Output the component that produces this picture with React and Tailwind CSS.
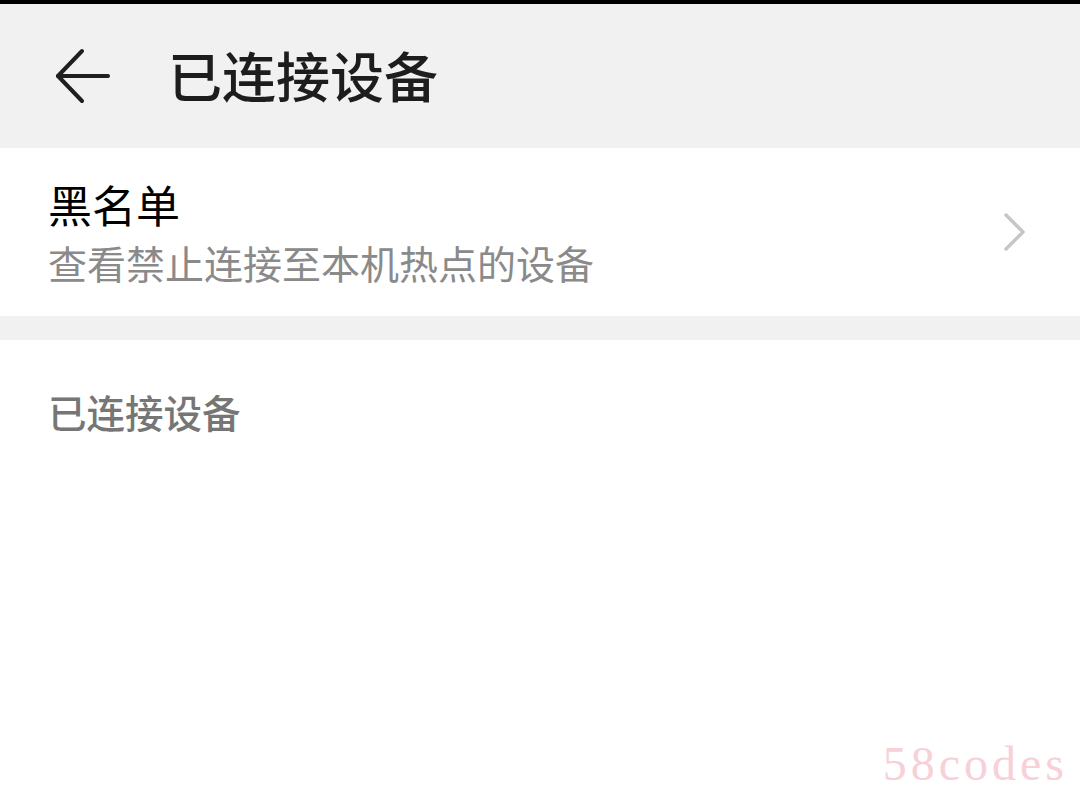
import React from 'react';

const cjk = { fontFamily: '"Noto Sans CJK SC", "Noto Sans", sans-serif' };

function BackArrow() {
  return (
    <svg width="58" height="58" viewBox="0 0 58 58" fill="none" stroke="#1f1f1f" strokeWidth="4" strokeLinecap="round" strokeLinejoin="round">
      <path d="M54 29H4" />
      <path d="M28 4L4 29l24 25" />
    </svg>
  );
}

function Chevron() {
  return (
    <svg width="24" height="40" viewBox="0 0 24 40" fill="none" stroke="#c6c6c6" strokeWidth="3.5" strokeLinecap="round" strokeLinejoin="round">
      <path d="M4 3l17 17L4 37" />
    </svg>
  );
}

export default function App() {
  return (
    <div className="w-[1080px] h-[792px] bg-white relative overflow-hidden" style={cjk}>
      <div className="h-[4px] bg-black"></div>

      {/* header */}
      <div className="h-[144px] bg-[#f1f1f1] flex items-center pl-[54px]">
        <BackArrow />
        <span className="ml-[56px] text-[54px] leading-none text-[#1d1d1d] font-medium -mt-[2px]">已连接设备</span>
      </div>

      {/* blacklist row */}
      <div className="h-[168px] flex items-center justify-between pl-[48px] pr-[54px]">
        <div className="flex flex-col">
          <span className="text-[44px] leading-none text-black">黑名单</span>
          <span className="mt-[17px] text-[39px] leading-none text-[#8a8a8a]">查看禁止连接至本机热点的设备</span>
        </div>
        <Chevron />
      </div>

      <div className="h-[24px] bg-[#f1f1f1]"></div>

      <div className="pl-[48px] pt-[52px]">
        <span className="text-[38.5px] leading-none text-[#767676] font-medium">已连接设备</span>
      </div>

      <div
        className="absolute right-[12px] bottom-[4px] text-[48px] leading-none text-[#f8d0d8] tracking-[4px]"
        style={{ fontFamily: '"Liberation Serif", serif' }}
      >
        58codes
      </div>
    </div>
  );
}
